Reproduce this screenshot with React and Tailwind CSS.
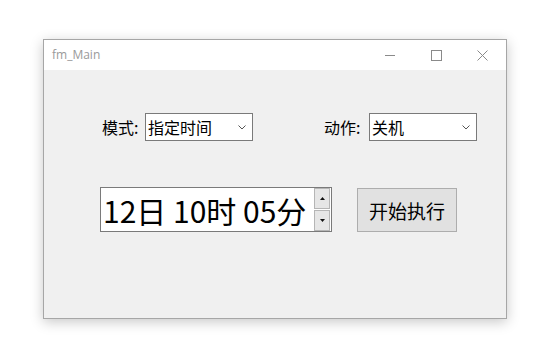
import React from "react";

const cjk = { fontFamily: '"Noto Sans CJK SC", "Noto Sans", sans-serif' };

function Chevron() {
  return (
    <svg width="8" height="5" viewBox="0 0 8 5" className="block">
      <path d="M0.5 0.5 L4 4 L7.5 0.5" fill="none" stroke="#555" strokeWidth="1" />
    </svg>
  );
}

function Combo({ value }) {
  return (
    <div className="w-[108px] h-[28px] bg-white border border-[#7a7a7a] flex items-center justify-between pl-[2px] pr-[6px]">
      <span className="text-[16px] leading-none text-black" style={cjk}>{value}</span>
      <Chevron />
    </div>
  );
}

export default function App() {
  return (
    <div className="w-[533px] h-[345px] bg-white pt-[39px] pl-[43px]">
      <div className="w-[464px] h-[280px] border border-[#a6a6a6] shadow-[0_3px_12px_rgba(0,0,0,0.22)] flex flex-col">
        <div className="h-[30px] bg-white flex items-center">
          <span className="ml-[8px] text-[12px] text-[#9a9a9a]" style={{ fontFamily: '"Open Sans", "Noto Sans", sans-serif' }}>fm_Main</span>
          <div className="ml-auto flex items-center h-full">
            <div className="w-[46px] h-full flex items-center justify-center">
              <svg width="10" height="10" viewBox="0 0 10 10"><path d="M0 5.5 H10" stroke="#8a8a8a" strokeWidth="1" /></svg>
            </div>
            <div className="w-[46px] h-full flex items-center justify-center">
              <svg width="11" height="11" viewBox="0 0 11 11"><rect x="0.5" y="0.5" width="10" height="10" fill="none" stroke="#8a8a8a" strokeWidth="1" /></svg>
            </div>
            <div className="w-[46px] h-full flex items-center justify-center mr-[1px]">
              <svg width="11" height="11" viewBox="0 0 11 11"><path d="M0.5 0.5 L10.5 10.5 M10.5 0.5 L0.5 10.5" stroke="#8a8a8a" strokeWidth="1" /></svg>
            </div>
          </div>
        </div>
        <div className="flex-1 bg-[#f0f0f0] flex flex-col">
          <div className="flex items-center mt-[43px] pl-[58px]">
            <span className="w-[43px] text-[16px] text-black" style={cjk}>模式:</span>
            <Combo value="指定时间" />
            <span className="ml-[71px] w-[45px] text-[16px] text-black" style={cjk}>动作:</span>
            <Combo value="关机" />
          </div>
          <div className="flex items-start mt-[46px] pl-[56px]">
            <div className="w-[232px] h-[45px] bg-white border border-[#7a7a7a] flex items-center justify-between">
              <span className="ml-[2px] text-[30px] leading-none text-black whitespace-pre" style={cjk}>12日 10时 05分</span>
              <div className="w-[16px] h-[43px] mr-[1px] flex flex-col gap-[1px]">
                <div className="flex-1 bg-[#e6e6e6] border border-[#b5b5b5] flex items-center justify-center">
                  <svg width="5" height="3" viewBox="0 0 5 3"><path d="M2.5 0 L5 3 H0 Z" fill="#111" /></svg>
                </div>
                <div className="flex-1 bg-[#e6e6e6] border border-[#b5b5b5] flex items-center justify-center">
                  <svg width="5" height="3" viewBox="0 0 5 3"><path d="M0 0 H5 L2.5 3 Z" fill="#111" /></svg>
                </div>
              </div>
            </div>
            <div className="ml-[25px] mt-[1px] w-[100px] h-[44px] bg-[#e1e1e1] border border-[#adadad] flex items-center justify-center">
              <span className="text-[19px] leading-none text-black" style={cjk}>开始执行</span>
            </div>
          </div>
        </div>
      </div>
    </div>
  );
}
